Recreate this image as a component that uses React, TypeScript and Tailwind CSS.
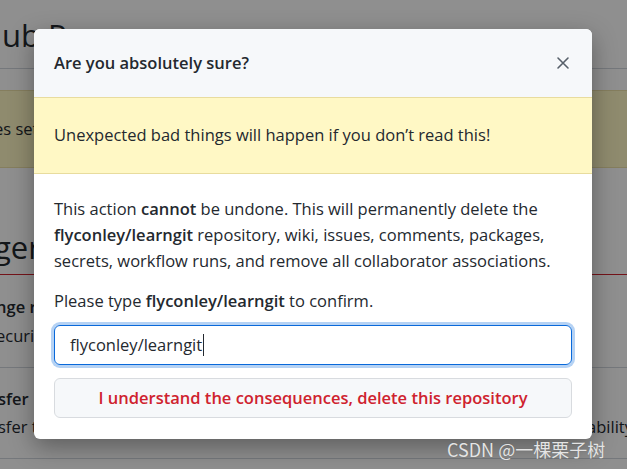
const Home = () => {
  return (
    <div className="relative w-[627px] h-[469px] overflow-hidden bg-white text-[#24292f] font-['Open_Sans','Liberation_Sans',sans-serif]">
      {/* page behind the dialog */}
      <div className="flex flex-col">
        <div className="h-[69px] flex items-center pl-[2px] pt-[2px] border-b border-[#d0d7de] text-[31px] leading-none">
          ub Pages
        </div>
        <div className="mt-[21px] h-[78px] flex items-center bg-[#fff8c5] border-y border-[#eee0a8] text-[16.5px] -ml-[6px]">
          es settings have moved
        </div>
        <div className="mt-[52px] h-[55px] flex items-center border-b border-[#cf222e] text-[31px] -ml-[6px]">
          ger Zone
        </div>
        <div className="h-[93px] flex flex-col justify-center border-b border-[#d0d7de] -ml-[4px] text-[16.5px] leading-[29px]">
          <span className="font-semibold">nge repository visibility</span>
          <span>ecurity</span>
        </div>
        <div className="h-[91px] flex flex-col justify-center border-b border-[#d0d7de] -ml-[2px] text-[16.5px] leading-[28px]">
          <span className="font-semibold">sfer</span>
          <div className="flex justify-between">
            <span>sfer this repository</span>
            <span className="mr-[-6px]">ability</span>
          </div>
        </div>
      </div>

      {/* dim layer */}
      <div className="absolute inset-0 bg-black/[0.44]" />

      {/* dialog */}
      <div className="absolute left-[34px] top-[29px] w-[558px] bg-white rounded-[6px] overflow-hidden shadow-[0_8px_24px_rgba(0,0,0,0.35)]">
        <div className="h-[68px] flex items-center justify-between pl-5 pr-[22px] bg-[#f6f8fa]">
          <h1 className="text-[16.5px] font-semibold">Are you absolutely sure?</h1>
          <svg width="14" height="14" viewBox="0 0 14 14" className="text-[#57606a]">
            <path d="M2 2 L12 12 M12 2 L2 12" stroke="currentColor" strokeWidth="1.6" strokeLinecap="round" />
          </svg>
        </div>
        <div className="h-[77px] flex items-center px-5 bg-[#fff8c5] border-y border-[#e8dc9e] text-[16.5px]">
          Unexpected bad things will happen if you don’t read this!
        </div>
        <div className="px-5 pt-[22px] pb-[21px] text-[16.5px] leading-[26px]">
          <p>
            This action <b className="font-semibold">cannot</b> be undone. This will permanently delete the{" "}
            <b className="font-semibold">flyconley/learngit</b> repository, wiki, issues, comments, packages, secrets,
            workflow runs, and remove all collaborator associations.
          </p>
          <p className="mt-[14px]">
            Please type <b className="font-semibold">flyconley/learngit</b> to confirm.
          </p>
          <div className="mt-[11px] h-[40px] flex items-center px-[15px] rounded-[6px] border border-[#0969da] shadow-[0_0_0_3px_rgba(9,105,218,0.3)]">
            flyconley/learngit
            <span className="ml-[1px] w-[1px] h-[22px] bg-[#24292f]" />
          </div>
          <button className="mt-[13px] w-full h-[40px] rounded-[6px] border border-[#d8dbdf] bg-[#f6f8fa] text-[#cf222e] font-semibold">
            I understand the consequences, delete this repository
          </button>
        </div>
      </div>

      {/* watermark */}
      <div className="absolute left-[447px] top-[436px] text-[18px] text-[#e4e4e4] font-['Noto_Sans_CJK_SC',sans-serif] [text-shadow:0_0_1px_rgba(0,0,0,0.25)]">
        CSDN @一棵栗子树
      </div>
    </div>
  );
};

export default Home;
